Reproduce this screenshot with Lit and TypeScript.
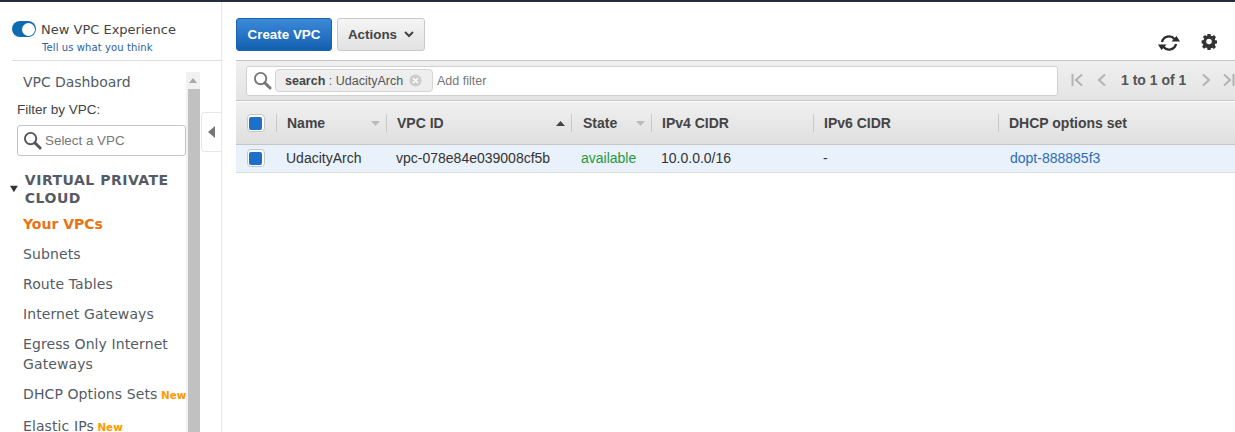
import { LitElement, html, css, svg } from 'lit';
import { customElement } from 'lit/decorators.js';

const navLinks = [
  { label: 'Your VPCs', active: true },
  { label: 'Subnets' },
  { label: 'Route Tables' },
  { label: 'Internet Gateways' },
  { label: 'Egress Only Internet Gateways' },
  { label: 'DHCP Options Sets', isNew: true },
  { label: 'Elastic IPs', isNew: true },
];

const columns = [
  { label: 'Name', sort: 'down' },
  { label: 'VPC ID', sort: 'up' },
  { label: 'State', sort: 'down' },
  { label: 'IPv4 CIDR' },
  { label: 'IPv6 CIDR' },
  { label: 'DHCP options set' },
];

const searchIcon = (color: string) => html`<svg width="19" height="19" viewBox="0 0 20 20" fill="none">
  <circle cx="8" cy="8" r="6" stroke=${color} stroke-width="2"></circle>
  <path d="M12.5 12.5L18 18" stroke=${color} stroke-width="3" stroke-linecap="round"></path>
</svg>`;

const pagerIcon = (d: string, w = 14) => html`<svg width=${w} height="14" viewBox="0 0 ${w} 14" fill="none">
  <path d=${d} stroke="#b3b3b3" stroke-width="2"></path>
</svg>`;

const sortArrow = (dir?: string) => {
  if (!dir) return '';
  return html`<svg class="sort" width="9" height="5" viewBox="0 0 9 5">
    ${dir === 'up'
      ? svg`<path d="M0 5L4.5 0L9 5Z" fill="#444"></path>`
      : svg`<path d="M0 0L4.5 5L9 0Z" fill="#bbb"></path>`}
  </svg>`;
};

@customElement('app-root')
export class AppRoot extends LitElement {
  static styles = css`
    :host {
      display: flex;
      flex-direction: column;
      width: 1235px;
      height: 432px;
      overflow: hidden;
      background: #fff;
      font-family: "Liberation Sans", Arial, sans-serif;
      font-size: 14px;
      color: #444;
    }
    .topbar {
      height: 2px;
      flex: none;
      background: #232f3e;
    }
    .page {
      display: flex;
      flex: 1;
      min-height: 0;
    }
    .sidebar {
      position: relative;
      width: 222px;
      flex: none;
      box-sizing: border-box;
      border-right: 1px solid #e6e6e6;
      display: flex;
      flex-direction: column;
      font-family: "DejaVu Sans", Verdana, sans-serif;
    }
    .experience {
      margin-left: 12px;
      height: 59px;
      flex: none;
      box-sizing: border-box;
      border-bottom: 1px solid #ddd;
      padding-top: 19px;
    }
    .experience-row {
      display: flex;
      align-items: center;
      gap: 5px;
      font-size: 13px;
      color: #444;
      height: 16px;
      white-space: nowrap;
    }
    .toggle {
      width: 24px;
      height: 16px;
      border-radius: 8px;
      background: #0f6cb0;
      position: relative;
      flex: none;
    }
    .toggle::after {
      content: '';
      position: absolute;
      right: 1px;
      top: 1.5px;
      width: 13px;
      height: 13px;
      border-radius: 50%;
      background: #fff;
    }
    .tell {
      margin: 4px 0 0 30px;
      font-size: 10px;
      letter-spacing: 0.1px;
      line-height: 13px;
      color: #2a5fa8;
      white-space: nowrap;
    }
    .nav-wrap {
      display: flex;
      flex: 1;
      min-height: 0;
      width: 200px;
      margin-top: 11px;
    }
    .nav {
      flex: 1;
      min-width: 0;
      overflow: hidden;
    }
    .scrollbar {
      width: 14px;
      flex: none;
      background: #f1f1f1;
      display: flex;
      flex-direction: column;
      align-items: flex-end;
    }
    .scroll-up {
      height: 17px;
      width: 14px;
      display: flex;
      align-items: center;
      justify-content: center;
    }
    .scroll-thumb {
      flex: 1;
      width: 12px;
      background: #c1c1c1;
    }
    .dash {
      padding: 2px 0 0 23px;
      font-size: 14px;
      line-height: 17px;
      letter-spacing: -0.05px;
      color: #545b64;
      white-space: nowrap;
    }
    .filter-label {
      margin: 11px 0 0 17px;
      font-family: "Liberation Sans", Arial, sans-serif;
      font-size: 13.5px;
      line-height: 16px;
      color: #444;
    }
    .vpc-select {
      display: flex;
      align-items: center;
      gap: 3px;
      margin: 7px 0 0 17px;
      width: 169px;
      height: 31px;
      box-sizing: border-box;
      border: 1px solid #c4c4c4;
      border-radius: 3px;
      padding-left: 5px;
      font-family: "Liberation Sans", Arial, sans-serif;
      font-size: 13.4px;
      color: #777;
    }
    .section {
      display: flex;
      align-items: center;
      margin: 15px 0 0 10px;
      gap: 5px;
    }
    .section-title {
      font-size: 14px;
      font-weight: bold;
      line-height: 18px;
      letter-spacing: 0.5px;
      color: #545b64;
      margin-left: 2px;
    }
    .links {
      list-style: none;
      margin: 7px 0 0;
      padding: 0 0 0 23px;
      font-size: 14px;
      line-height: 20px;
      letter-spacing: 0.1px;
      color: #545b64;
      white-space: nowrap;
    }
    .links li {
      margin-bottom: 10px;
    }
    .links li.wrap {
      white-space: normal;
    }
    .links li.has-new {
      margin-bottom: 11px;
    }
    .links li.active {
      color: #ec7211;
      font-weight: bold;
      letter-spacing: 0;
    }
    .new {
      color: #ff9900;
      font-size: 10.4px;
      font-weight: bold;
      letter-spacing: 0;
      margin-left: -1px;
    }
    .collapse {
      position: absolute;
      left: 201px;
      top: 110px;
      width: 20px;
      height: 40px;
      box-sizing: border-box;
      border: 1px solid #e6e6e6;
      border-right: none;
      border-radius: 4px 0 0 4px;
      background: #fff;
      display: flex;
      align-items: center;
      justify-content: center;
    }
    .main {
      flex: 1;
      min-width: 0;
      padding: 16px 0 0 14px;
    }
    .toolbar {
      display: flex;
      align-items: center;
      gap: 5px;
      height: 33px;
      position: relative;
    }
    .btn {
      box-sizing: border-box;
      height: 33px;
      border-radius: 3px;
      display: flex;
      align-items: center;
      justify-content: center;
      font-weight: bold;
      font-size: 13.4px;
      padding-bottom: 1px;
    }
    .btn.primary {
      width: 96px;
      color: #fff;
      background: linear-gradient(#3b8ad8, #135fb0);
      border: 1px solid #1a62ad;
    }
    .btn.plain {
      width: 88px;
      gap: 7px;
      color: #444;
      background: linear-gradient(#f5f5f5, #e2e2e2);
      border: 1px solid #c9c9c9;
    }
    .tools {
      margin-left: auto;
      display: flex;
      align-items: center;
      gap: 21px;
      padding: 14px 18px 0 0;
    }
    .refresh {
      margin-top: 3px;
    }
    .filterbar {
      display: flex;
      align-items: center;
      margin-top: 9px;
      height: 41px;
      box-sizing: border-box;
      border-top: 1px solid #c6c6c6;
      border-bottom: 1px solid #c6c6c6;
      background: linear-gradient(#efefef, #e4e4e4);
      padding-left: 10px;
    }
    .filterbox {
      display: flex;
      align-items: center;
      box-sizing: border-box;
      width: 812px;
      height: 30px;
      background: #fff;
      border: 1px solid #d0d0d0;
      border-radius: 3px;
      padding-left: 6px;
      gap: 3px;
      flex: none;
    }
    .chip {
      display: flex;
      align-items: center;
      box-sizing: border-box;
      height: 23px;
      width: 158px;
      padding-left: 9px;
      background: #eee;
      border: 1px solid #d5d5d5;
      border-radius: 4px;
      color: #555;
      font-size: 12.5px;
      white-space: nowrap;
    }
    .chip b {
      color: #444;
    }
    .chip svg {
      margin-left: 6px;
    }
    .placeholder {
      margin-left: 1px;
      color: #777;
      font-size: 12.5px;
    }
    .pager {
      display: flex;
      align-items: center;
      margin: 0 0 1px 13px;
      font-weight: bold;
      color: #555;
      white-space: nowrap;
    }
    .pager .count {
      margin: 0 16px 0 15px;
    }
    .pager .step {
      width: 12px;
    }
    .pager svg {
      flex: none;
    }
    .grid {
      display: grid;
      grid-template-columns: 40px 110px 185px 80px 162px 185px 1fr;
    }
    .head {
      height: 43px;
      box-sizing: border-box;
      margin-top: 1px;
      border-bottom: 1px solid #c6c6c6;
      background: linear-gradient(#f0f0f0, #dfdfdf);
      align-items: center;
      font-weight: bold;
      color: #444;
    }
    .head-cell {
      display: flex;
      align-items: center;
      height: 18px;
      box-sizing: border-box;
      padding: 0 6px 0 10px;
      border-left: 1px solid #c9c9c9;
    }
    .head-cell.state {
      padding-left: 11px;
    }
    .head-cell:last-child {
      padding-right: 0;
    }
    .sort {
      margin-left: auto;
    }
    .row {
      height: 28px;
      box-sizing: border-box;
      border-bottom: 1px solid #dcdcdc;
      background: #e9f1fb;
      align-items: center;
      color: #333;
      white-space: nowrap;
      padding-bottom: 1px;
    }
    .cell {
      padding-left: 10px;
    }
    .check-cell {
      display: flex;
      justify-content: center;
      padding-right: 1px;
    }
    .check {
      width: 18px;
      height: 18px;
      box-sizing: border-box;
      border: 1px solid #c6c6c6;
      border-radius: 4px;
      background: #fff;
      display: flex;
      align-items: center;
      justify-content: center;
    }
    .check::after {
      content: '';
      width: 13px;
      height: 13px;
      border-radius: 2px;
      background: #1e6fc8;
    }
    .ok {
      color: #1d9a3f;
    }
    .link {
      color: #2b6cb8;
      padding-left: 12px;
    }
  `;

  render() {
    return html`
      <div class="topbar"></div>
      <div class="page">
        <aside class="sidebar">
          <div class="experience">
            <div class="experience-row"><span class="toggle"></span>New VPC Experience</div>
            <div class="tell">Tell us what you think</div>
          </div>
          <div class="nav-wrap">
            <div class="nav">
              <div class="dash">VPC Dashboard</div>
              <div class="filter-label">Filter by VPC:</div>
              <div class="vpc-select">${searchIcon('#555')}Select a VPC</div>
              <div class="section">
                <svg width="10" height="8" viewBox="0 0 10 8"><path d="M0 0H10L5 8Z" fill="#333"></path></svg>
                <div class="section-title">VIRTUAL PRIVATE CLOUD</div>
              </div>
              <ul class="links">
                ${navLinks.map(
                  (l) => html`<li class="${l.active ? 'active' : ''} ${l.isNew ? 'has-new' : 'wrap'}">
                    ${l.label}${l.isNew ? html` <span class="new">New</span>` : ''}
                  </li>`
                )}
              </ul>
            </div>
            <div class="scrollbar">
              <div class="scroll-up">
                <svg width="8" height="5" viewBox="0 0 8 5"><path d="M0 5L4 0L8 5Z" fill="#a8a8a8"></path></svg>
              </div>
              <div class="scroll-thumb"></div>
            </div>
          </div>
          <div class="collapse">
            <svg width="7" height="12" viewBox="0 0 7 12"><path d="M7 0V12L0 6Z" fill="#777"></path></svg>
          </div>
        </aside>
        <main class="main">
          <div class="toolbar">
            <div class="btn primary">Create VPC</div>
            <div class="btn plain">
              Actions
              <svg width="10" height="7" viewBox="0 0 10 7" fill="none">
                <path d="M1 1L5 5L9 1" stroke="#444" stroke-width="2"></path>
              </svg>
            </div>
            <div class="tools">
              <svg class="refresh" width="22" height="18" viewBox="0 0 22 18" fill="none">
                <path d="M4 8A7.2 7.2 0 0 1 16.5 5" stroke="#2b2b2b" stroke-width="2.4"></path>
                <path d="M18 10A7.2 7.2 0 0 1 5.5 13" stroke="#2b2b2b" stroke-width="2.4"></path>
                <path d="M13.5 7.5H22L18.5 2Z" fill="#2b2b2b"></path>
                <path d="M0 10.5H8.5L3.5 16Z" fill="#2b2b2b"></path>
              </svg>
              <svg width="16" height="16" viewBox="0 0 16 16">
                <path fill="#333" fill-rule="evenodd" d="M6.4 0h3.2l.4 2.3 1.3.6 2-1.3 2.2 2.2-1.3 2 .5 1.3 2.3.4v3.1l-2.3.4-.5 1.3 1.3 2-2.2 2.2-2-1.3-1.3.5-.4 2.3H6.4L6 15.5l-1.3-.5-2 1.3L.5 14.1l1.3-2-.5-1.3L0 10.4V7.3l2.3-.4.5-1.3-1.3-2 2.2-2.2 2 1.3L6 2.3zM8 5.4a3 3 0 1 0 0 6 3 3 0 0 0 0-6z" transform="scale(.93) translate(.6 -.4)"></path>
              </svg>
            </div>
          </div>
          <div class="filterbar">
            <div class="filterbox">
              ${searchIcon('#777')}
              <div class="chip">
                <span><b>search</b> : UdacityArch</span>
                <svg width="13" height="13" viewBox="0 0 13 13">
                  <circle cx="6.5" cy="6.5" r="6" fill="#ccc"></circle>
                  <path d="M4 4L9 9M9 4L4 9" stroke="#fff" stroke-width="1.5"></path>
                </svg>
              </div>
              <span class="placeholder">Add filter</span>
            </div>
            <div class="pager">
              ${pagerIcon('M1.5 1V13M11 1.5L5 7L11 12.5')}
              <span class="step"></span>
              ${pagerIcon('M8 1.5L2 7L8 12.5', 9)}
              <span class="count">1 to 1 of 1</span>
              ${pagerIcon('M1 1.5L7 7L1 12.5', 9)}
              <span class="step"></span>
              ${pagerIcon('M1 1.5L7 7L1 12.5M10.5 1V13')}
            </div>
          </div>
          <div class="grid head">
            <div class="check-cell"><span class="check"></span></div>
            ${columns.map(
              (c) => html`<div class="head-cell ${c.label === 'State' ? 'state' : ''}">${c.label}${sortArrow(c.sort)}</div>`
            )}
          </div>
          <div class="grid row">
            <div class="check-cell"><span class="check"></span></div>
            <div class="cell">UdacityArch</div>
            <div class="cell">vpc-078e84e039008cf5b</div>
            <div class="cell ok">available</div>
            <div class="cell">10.0.0.0/16</div>
            <div class="cell">-</div>
            <div class="cell link">dopt-888885f3</div>
          </div>
        </main>
      </div>
    `;
  }
}
